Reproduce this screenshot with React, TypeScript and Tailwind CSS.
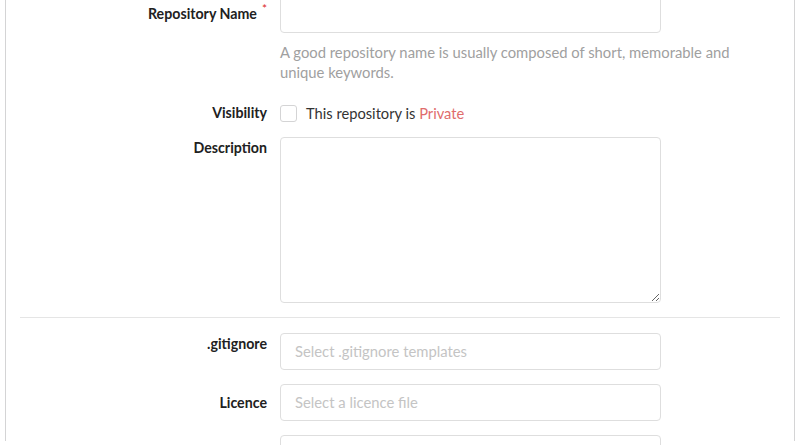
import React from 'react'

const font = { fontFamily: 'Lato, "Open Sans", sans-serif' }

function Label({ children, required, className = '' }: { children: React.ReactNode; required?: boolean; className?: string }) {
  return (
    <label className={`block w-[274px] shrink-0 text-right pr-[13px] text-[14.2px] leading-[20px] font-bold text-[#212121] ${className}`}>
      {children}
      {required && <span className="relative -top-[6px] ml-[5px] text-[#db2828] text-[12px] font-normal">*</span>}
    </label>
  )
}

export default function App() {
  return (
    <div className="w-[800px] h-[445px] overflow-hidden bg-white" style={font}>
      <div className="mx-[5px] h-full border-x border-[#d4d4d5] -mt-1">
        {/* repository name */}
        <div className="flex items-center">
          <Label required>Repository Name</Label>
          <input className="w-[381px] h-[37px] rounded border border-[#dedede] px-[14px] outline-none" />
        </div>
        <div className="flex mt-[9px]">
          <div className="w-[274px] shrink-0" />
          <p className="w-[470px] text-[14.8px] leading-[20px] text-[#a0a0a0]">
            A good repository name is usually composed of short, memorable and unique keywords.
          </p>
        </div>

        {/* visibility */}
        <div className="flex items-center mt-[22px] h-[18px]">
          <Label>Visibility</Label>
          <div className="flex items-center gap-[9px]">
            <span className="w-[17px] h-[17px] rounded-[3px] border border-[#d4d4d5] bg-white" />
            <span className="text-[14.7px] text-[#333]">
              This repository is <span className="text-[#e06c6c]">Private</span>
            </span>
          </div>
        </div>

        {/* description */}
        <div className="flex mt-[15px]">
          <Label className="pt-[1px]">Description</Label>
          <textarea className="w-[381px] h-[166px] rounded border border-[#dedede] px-[14px] py-2 outline-none resize-y" />
        </div>

        <div className="mx-[14px] mt-[14px] border-t border-[#e5e5e5]" />

        {/* gitignore */}
        <div className="flex mt-[15px]">
          <Label className="pt-[1px]">.gitignore</Label>
          <div className="w-[381px] h-[37px] rounded border border-[#dedede] px-[14px] flex items-center text-[14.8px] text-[#c4c4c4]">
            Select .gitignore templates
          </div>
        </div>

        {/* licence */}
        <div className="flex items-center mt-[14px]">
          <Label>Licence</Label>
          <div className="w-[381px] h-[37px] rounded border border-[#dedede] px-[14px] flex items-center text-[14.8px] text-[#c4c4c4]">
            Select a licence file
          </div>
        </div>

        <div className="flex mt-[14px]">
          <div className="w-[274px] shrink-0" />
          <div className="w-[381px] h-[37px] rounded border border-[#dedede]" />
        </div>
      </div>
    </div>
  )
}
